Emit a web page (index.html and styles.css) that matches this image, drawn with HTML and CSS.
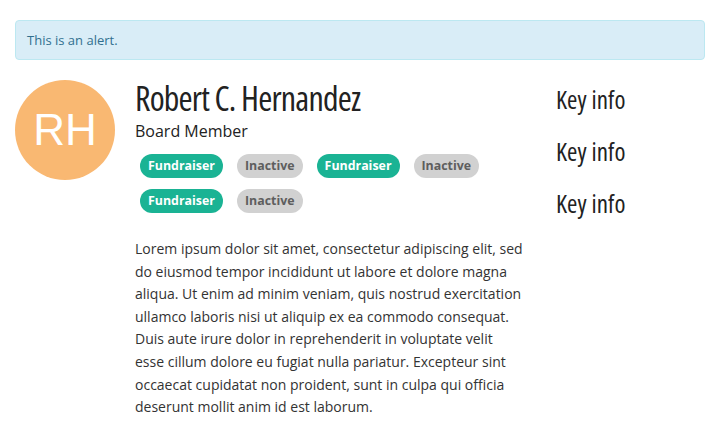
FILE: index.html
```html
<!DOCTYPE html>
<html>
<head>
<meta charset="utf-8">
<link rel="stylesheet" href="styles.css">
</head>
<body>
<div class="page">
  <div class="alert">This is an alert.</div>
  <div class="profile">
    <div class="avatar">RH</div>
    <div class="main">
      <h1 class="name">Robert C. Hernandez</h1>
      <div class="role">Board Member</div>
      <div class="tags">
        <span class="tag tag-green">Fundraiser</span>
        <span class="tag tag-grey">Inactive</span>
        <span class="tag tag-green">Fundraiser</span>
        <span class="tag tag-grey">Inactive</span>
        <span class="tag tag-green">Fundraiser</span>
        <span class="tag tag-grey">Inactive</span>
      </div>
      <p class="bio">Lorem ipsum dolor sit amet, consectetur adipiscing elit, sed do eiusmod tempor incididunt ut labore et dolore magna aliqua. Ut enim ad minim veniam, quis nostrud exercitation ullamco laboris nisi ut aliquip ex ea commodo consequat. Duis aute irure dolor in reprehenderit in voluptate velit esse cillum dolore eu fugiat nulla pariatur. Excepteur sint occaecat cupidatat non proident, sunt in culpa qui officia deserunt mollit anim id est laborum.</p>
    </div>
    <div class="side">
      <div class="key">Key info</div>
      <div class="key">Key info</div>
      <div class="key">Key info</div>
    </div>
  </div>
</div>
</body>
</html>
```

FILE: styles.css
```css
html, body {
  margin: 0;
  padding: 0;
  background: #ffffff;
}
body {
  font-family: "Open Sans", "Liberation Sans", sans-serif;
  color: #333333;
}
.page {
  padding: 20px 15px 0 15px;
}
.alert {
  background: #d9edf7;
  border: 1px solid #bce8f1;
  border-radius: 4px;
  color: #31708f;
  font-size: 13px;
  line-height: 18px;
  padding: 10px 11px;
}
.profile {
  display: flex;
  margin-top: 20px;
}
.avatar {
  flex: none;
  width: 100px;
  height: 100px;
  border-radius: 50%;
  background: #f9b872;
  color: #ffffff;
  font-family: "Liberation Sans", Arial, sans-serif;
  font-size: 44px;
  display: flex;
  align-items: center;
  justify-content: center;
  margin-right: 20px;
}
.main {
  flex: none;
  width: 388px;
}
.name {
  margin: 0;
  font-family: "Open Sans", sans-serif;
  font-stretch: 75%;
  font-weight: normal;
  font-size: 34px;
  line-height: 36px;
  letter-spacing: -0.8px;
  color: #222222;
}
.role {
  margin-top: 5px;
  font-size: 16px;
  line-height: 20px;
  color: #222222;
}
.tags {
  margin-top: 13px;
  display: flex;
  flex-wrap: wrap;
  column-gap: 14px;
  row-gap: 11px;
  padding-left: 5px;
  width: 360px;
}
.tag {
  font-size: 12.4px;
  font-weight: 700;
  line-height: 24px;
  height: 24px;
  padding: 0 8px;
  border-radius: 12px;
}
.tag-green {
  background: #1ab394;
  color: #ffffff;
}
.tag-grey {
  background: #d1d1d1;
  color: #5e5e5e;
}
.bio {
  margin: 25px 0 0 0;
  font-size: 14px;
  line-height: 22.6px;
  color: #333333;
}
.side {
  margin-left: 33px;
  padding-top: 3px;
}
.key {
  font-family: "Open Sans", sans-serif;
  font-stretch: 75%;
  font-size: 25px;
  line-height: 32px;
  letter-spacing: 0.1px;
  margin-bottom: 20px;
  color: #222222;
}
```
